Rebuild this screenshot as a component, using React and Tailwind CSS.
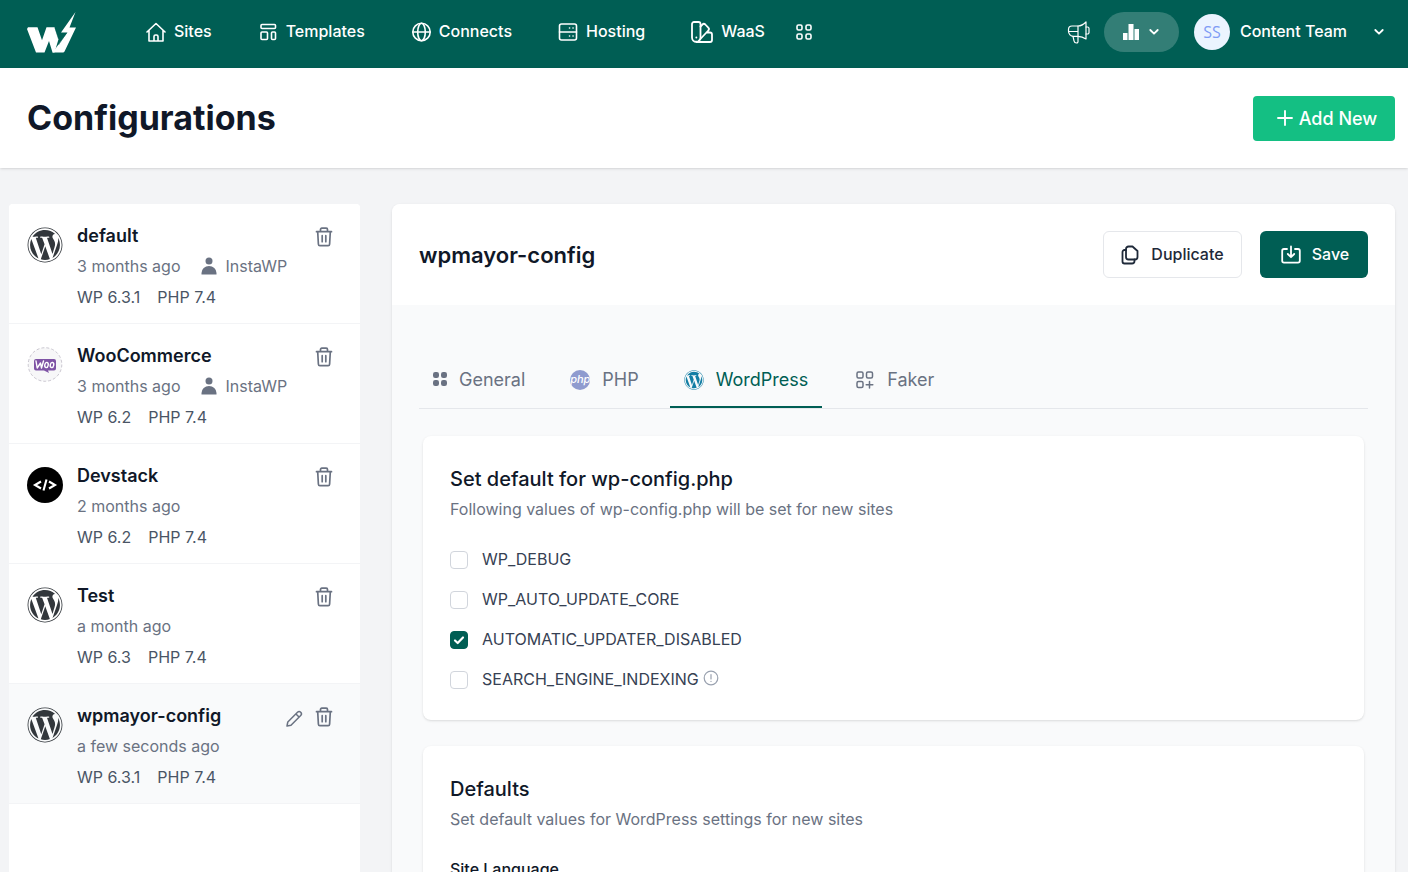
import React, { useState } from 'react';
import { FaWordpress } from 'react-icons/fa';

const stroke = {
    fill: 'none',
    stroke: 'currentColor',
    strokeWidth: 1.6,
    strokeLinecap: 'round',
    strokeLinejoin: 'round',
    'aria-hidden': true,
};

const LogoIcon = () => (
    <svg viewBox="0 0 50 42" className="w-[50px] h-[42px]" fill="currentColor" aria-hidden="true">
        <path d="M1 15.300h9.500l4.500 13 4.500-13h8l4 12L27.500 40.500h-2L22 29l-4.500 11.500H9L0 17z" />
        <path d="M48.500 0L34 20.500h6.500L25.500 40.500H36a2 2 0 0 0 1.500-1L49 15.500h-6.500z" />
        <path d="M28 16l3.500 11M39.500 21L31.500 33" fill="none" stroke="#005e54" strokeWidth="0.500" />
    </svg>
);

const HomeIcon = () => (
    <svg viewBox="0 0 20 20" className="w-5 h-5" {...stroke}>
        <path d="M1 10l9-8.500 9 8.500M3 8.500V19h14V8.500M8 19v-4.500a1.500 1.500 0 0 1 1.500-1.500h1a1.500 1.500 0 0 1 1.500 1.500V19" />
    </svg>
);

const TemplateIcon = () => (
    <svg viewBox="0 0 20 20" className="w-5 h-5" {...stroke}>
        <rect x="3" y="2.500" width="14.500" height="4" rx="1" />
        <rect x="3" y="10" width="6.500" height="7.500" rx="1" />
        <rect x="13.500" y="10" width="4" height="7.500" rx="1" />
    </svg>
);

const GlobeIcon = () => (
    <svg viewBox="0 0 20 20" className="w-5 h-5" {...stroke}>
        <circle cx="10.500" cy="10" r="8.700" />
        <ellipse cx="10.500" cy="10" rx="3.800" ry="8.700" />
        <path d="M2 10h17" />
    </svg>
);

const ServerIcon = () => (
    <svg viewBox="0 0 20 20" className="w-5 h-5" {...stroke}>
        <rect x="1.500" y="2" width="17" height="16" rx="2" />
        <path d="M1.500 10h17M11.500 6h.1M15 6h.1M11.500 14h.1M15 14h.1" />
    </svg>
);

const SwatchIcon = () => (
    <svg viewBox="0 0 22 22" className="w-[22px] h-[22px]" {...stroke} strokeWidth="1.800">
        <path d="M1 3a2 2 0 0 1 2-2h4.500a2 2 0 0 1 2 2v13.500a4.200 4.200 0 0 1-8.500 0z" />
        <path d="M9.500 5.500l2-2a2 2 0 0 1 2.800 0l3 3.200a2 2 0 0 1 0 2.800L8 19.500M15.500 11.500H19a2 2 0 0 1 2 2V19a2 2 0 0 1-2 2H5.500M5.300 16.500h.1" />
    </svg>
);

const GridIcon = () => (
    <svg viewBox="0 0 18 18" className="w-[18px] h-[18px]" {...stroke}>
        <rect x="2" y="2" width="5" height="5" rx="1.500" />
        <rect x="11" y="2" width="5" height="5" rx="1.500" />
        <rect x="2" y="11" width="5" height="5" rx="1.500" />
        <rect x="11" y="11" width="5" height="5" rx="1.500" />
    </svg>
);

const MegaphoneIcon = () => (
    <svg viewBox="0 0 24 24" className="w-6 h-6" {...stroke} strokeWidth="1.200">
        <path d="M19 2v17c-2.500-1.800-5-2.700-8-2.700H6.500a5 5 0 0 1-5-5v-1.800a3.500 3.500 0 0 1 3.500-3.500h6c3 0 6-2 8-4z" />
        <path d="M11 6v10.300M1.500 11.500H11M6 16.300l1 4.500c.3 1.500 1.300 2.200 2.500 2.200s1.700-1 1.500-2.200v-4.500M19 7h1.500A1.500 1.500 0 0 1 22 8.500v4a1.500 1.500 0 0 1-1.500 1.500H19" />
    </svg>
);

const ChartIcon = () => (
    <svg viewBox="0 0 16 16" className="w-4 h-4" fill="currentColor" aria-hidden="true">
        <path d="M0 9h4.500v7H0zM5.500 0h5v16h-5zM11.500 5H16v11h-4.500z" />
    </svg>
);

const ChevronIcon = () => (
    <svg viewBox="0 0 10 10" className="w-[10px] h-[10px]" {...stroke} strokeWidth="1.800">
        <path d="M1.300 3L5 6.700 8.700 3" />
    </svg>
);

const PlusIcon = () => (
    <svg viewBox="0 0 16 16" className="w-4 h-4" {...stroke} strokeWidth="1.900">
        <path d="M8 1v14M1 8h14" />
    </svg>
);

const TrashIcon = () => (
    <svg viewBox="0 0 18 20" className="w-[18px] h-5" {...stroke} strokeWidth="1.700">
        <path d="M1.500 4.700h15M2.700 4.700l.7 12.500a1.500 1.500 0 0 0 1.500 1.400h8.200a1.500 1.500 0 0 0 1.500-1.400l.7-12.500M5.500 4.500V2.500a1.300 1.300 0 0 1 1.300-1.300h4.400a1.300 1.300 0 0 1 1.300 1.300v2M7.200 8.700v6M10.800 8.700v6" />
    </svg>
);

const PencilIcon = () => (
    <svg viewBox="0 0 18 18" className="w-[18px] h-[18px]" {...stroke} strokeWidth="1.500">
        <path d="M2 17l.8-4L12.500 3.300a2.200 2.200 0 0 1 3.200 3.200L6 16.200zM11 5l3 3" />
    </svg>
);

const UserIcon = () => (
    <svg viewBox="0 0 16 18" className="w-4 h-[18px]" fill="currentColor" aria-hidden="true">
        <circle cx="8" cy="4" r="3.500" />
        <path d="M.5 17.500v-1.500a7.500 7 0 0 1 15 0v1.500z" />
    </svg>
);

const DuplicateIcon = () => (
    <svg viewBox="1 0 18 20" className="w-[18px] h-5" {...stroke} strokeWidth="1.800">
        <path d="M8.500 1.500h4l5 4.500v6a2.500 2.500 0 0 1-2.500 2.500H8.500A2.500 2.500 0 0 1 6 12V4a2.500 2.500 0 0 1 2.500-2.500z" />
        <path d="M6 5h-1.500A2 2 0 0 0 2.500 7v9.500a2 2 0 0 0 2 2H12a2.500 2.500 0 0 0 2.500-2.500v-1.500" />
    </svg>
);

const SaveIcon = () => (
    <svg viewBox="0 0 20 20" className="w-5 h-5" {...stroke} strokeWidth="1.800">
        <path d="M6 4H3a1.800 1.800 0 0 0-1.800 1.800v10a1.800 1.800 0 0 0 1.800 1.800h14a1.800 1.800 0 0 0 1.800-1.800v-10A1.800 1.800 0 0 0 17 4h-3M10 1.500V12M6.800 9l3.200 3.200L13.200 9" />
    </svg>
);

const DotsIcon = () => (
    <svg viewBox="0 0 14 20" className="w-[14px] h-5" fill="currentColor" aria-hidden="true">
        <rect x="0" y="2" width="6" height="6" rx="2.200" />
        <rect x="8" y="2" width="6" height="6" rx="2.200" />
        <rect x="0" y="10" width="6" height="6" rx="2.200" />
        <rect x="8" y="10" width="6" height="6" rx="2.200" />
    </svg>
);

const PhpIcon = () => (
    <span className="w-5 h-5 rounded-full bg-[#8f9bcf] text-white text-[11px] leading-[18px] italic font-medium flex justify-center overflow-hidden">
        php
    </span>
);

const FakerIcon = () => (
    <svg viewBox="0 0 22 20" className="w-[22px] h-5" {...stroke} strokeWidth="1.500">
        <rect x="4" y="2" width="6" height="6" rx="1.500" />
        <rect x="13.500" y="2" width="6" height="6" rx="1.500" />
        <rect x="4" y="11.500" width="6" height="6" rx="1.500" />
        <path d="M16.500 11.500v6.500M13.200 14.700h6.600" />
    </svg>
);

const InfoIcon = () => (
    <svg viewBox="0 0 16 16" className="w-4 h-4" {...stroke} strokeWidth="1.200">
        <circle cx="8" cy="8" r="6.800" />
        <path d="M8 4.500V9M8 11.300v.1" />
    </svg>
);

const WooAvatar = () => (
    <svg viewBox="0 0 36 36" className="w-9 h-9" aria-label="WooCommerce logo">
        <circle cx="18" cy="17.500" r="16.800" fill="#f7f7f8" stroke="#b5b0bd" strokeWidth="0.700" strokeDasharray="3 2" />
        <path d="M9 12h18a2 2 0 0 1 2 2v7.500a2 2 0 0 1-2 2h-6l1 2.500-5-2.500H9a2 2 0 0 1-2-2V14a2 2 0 0 1 2-2z" fill="#7f54a5" />
        <g fill="none" stroke="#fff" strokeWidth="1.400" strokeLinecap="round" strokeLinejoin="round">
            <path d="M9 14l1.200 7 3.300-5 1 5L16.500 14" />
            <ellipse cx="19.500" cy="18" rx="1.700" ry="2.600" transform="rotate(12 19.500 18)" />
            <ellipse cx="25" cy="18" rx="1.700" ry="2.600" transform="rotate(12 25 18)" />
        </g>
    </svg>
);

const CodeAvatar = () => (
    <svg viewBox="0 0 36 36" className="w-9 h-9" aria-label="Devstack logo">
        <circle cx="18" cy="18" r="18" fill="#000" />
        <path d="M14 14.500L8 18l6 3.500M22 14.500l6 3.500-6 3.500M19.500 12.500l-3 11" fill="none" stroke="#fff" strokeWidth="2.100" />
    </svg>
);

const avatars = {
    wordpress: <FaWordpress className="w-9 h-9 text-[#32373c]" />,
    woo: <WooAvatar />,
    code: <CodeAvatar />,
};

const navItems = [
    { label: 'Sites', icon: <HomeIcon /> },
    { label: 'Templates', icon: <TemplateIcon /> },
    { label: 'Connects', icon: <GlobeIcon /> },
    { label: 'Hosting', icon: <ServerIcon /> },
    { label: 'WaaS', icon: <SwatchIcon /> },
];

const configs = [
    { name: 'default', time: '3 months ago', owner: 'InstaWP', wp: '6.3.1', php: '7.4', avatar: 'wordpress' },
    { name: 'WooCommerce', time: '3 months ago', owner: 'InstaWP', wp: '6.2', php: '7.4', avatar: 'woo' },
    { name: 'Devstack', time: '2 months ago', wp: '6.2', php: '7.4', avatar: 'code' },
    { name: 'Test', time: 'a month ago', wp: '6.3', php: '7.4', avatar: 'wordpress' },
    { name: 'wpmayor-config', time: 'a few seconds ago', wp: '6.3.1', php: '7.4', avatar: 'wordpress', active: true },
];

const tabs = [
    { label: 'General', icon: <DotsIcon /> },
    { label: 'PHP', icon: <PhpIcon /> },
    { label: 'WordPress', icon: <FaWordpress className="w-5 h-5 text-[#137ea4]" /> },
    { label: 'Faker', icon: <FakerIcon /> },
];

const Header = () => (
    <header className="h-[68px] shrink-0 bg-[#005e54] text-white flex items-center justify-between pl-[27px] pr-6">
        <div className="flex items-center">
            <a href="#home" aria-label="InstaWP" className="pb-0.5">
                <LogoIcon />
            </a>
            <nav className="flex items-center gap-[46px] ml-[69px] pb-1">
                {navItems.map((item) => (
                    <a key={item.label} href={`#${item.label}`} className="flex items-center gap-2 font-medium leading-6">
                        {item.icon}
                        <span className="pb-0.5">{item.label}</span>
                    </a>
                ))}
                <button type="button" aria-label="More" className="-ml-4">
                    <GridIcon />
                </button>
            </nav>
        </div>
        <div className="flex items-center pb-1">
            <button type="button" aria-label="Announcements">
                <MegaphoneIcon />
            </button>
            <button type="button" aria-label="Usage" className="ml-[13px] w-[75px] h-10 rounded-full bg-white/20 flex items-center justify-center gap-[10px]">
                <ChartIcon />
                <ChevronIcon />
            </button>
            <button type="button" className="ml-[15px] flex items-center font-medium leading-6">
                <span className="w-9 h-9 rounded-full bg-[#ebf4ff] text-[#7f9cf5] font-normal flex items-center justify-center font-['Open_Sans',sans-serif]">
                    SS
                </span>
                <span className="ml-[10px] mr-[27px] pb-0.5">Content Team</span>
                <ChevronIcon />
            </button>
        </div>
    </header>
);

const ConfigItem = ({ config }) => (
    <li className={`h-[120px] pt-5 pl-[18px] pr-[27px] flex items-start border-b border-gray-100 ${config.active ? 'bg-gray-50' : 'bg-white'}`}>
        <div className="shrink-0 pt-[3px]">{avatars[config.avatar]}</div>
        <div className="ml-[14px] flex-1">
            <h3 className="text-lg leading-6 font-semibold text-gray-900">{config.name}</h3>
            <div className="mt-[6px] flex items-center leading-6 text-gray-500">
                <span>{config.time}</span>
                {config.owner && (
                    <span className="ml-[21px] flex items-center gap-2">
                        <UserIcon />
                        {config.owner}
                    </span>
                )}
            </div>
            <div className="mt-[7px] flex gap-[17px] leading-6 text-gray-600">
                <span>WP {config.wp}</span>
                <span>PHP {config.php}</span>
            </div>
        </div>
        <div className="flex items-end gap-3 pt-[3px] text-gray-500">
            {config.active && (
                <button type="button" aria-label={`Edit ${config.name}`}>
                    <PencilIcon />
                </button>
            )}
            <button type="button" aria-label={`Delete ${config.name}`}>
                <TrashIcon />
            </button>
        </div>
    </li>
);

const CheckOption = ({ name, checked, onChange, info }) => (
    <div className="flex items-center">
        <span className="relative flex">
            <input
                id={name}
                type="checkbox"
                checked={checked}
                onChange={onChange}
                className="peer appearance-none w-[18px] h-[18px] rounded border border-gray-300 bg-white checked:bg-[#005e54] checked:border-[#005e54]"
            />
            <svg viewBox="0 0 18 18" className="absolute inset-0 w-[18px] h-[18px] text-white pointer-events-none hidden peer-checked:block" {...stroke} strokeWidth="2.200">
                <path d="M5 9.500l2.700 2.500L13 6.500" />
            </svg>
        </span>
        <label htmlFor={name} className="ml-[14px] pb-0.5 leading-6 text-gray-700">
            {name}
        </label>
        {info && (
            <span className="ml-1 pb-1 text-gray-400">
                <InfoIcon />
            </span>
        )}
    </div>
);

const Card = ({ title, description, children }) => (
    <section className="bg-white rounded-lg shadow px-[27px] pt-[29px] pb-[27px]">
        <h3 className="text-xl leading-7 font-medium text-gray-900">{title}</h3>
        <p className="mt-1 leading-6 text-gray-500">{description}</p>
        {children}
    </section>
);

const App = () => {
    const [activeTab, setActiveTab] = useState('WordPress');
    const [options, setOptions] = useState({
        WP_DEBUG: false,
        WP_AUTO_UPDATE_CORE: false,
        AUTOMATIC_UPDATER_DISABLED: true,
        SEARCH_ENGINE_INDEXING: false,
    });

    const toggle = (name) => setOptions({ ...options, [name]: !options[name] });

    return (
        <div className="h-screen flex flex-col overflow-hidden bg-gray-100 font-['Inter',sans-serif] text-base">
            <Header />
            <div className="h-[100px] shrink-0 bg-white shadow flex items-center justify-between pl-[27px] pr-[13px]">
                <h1 className="text-[34px] leading-10 font-bold text-gray-900">Configurations</h1>
                <button type="button" className="h-[45px] w-[142px] rounded bg-[#14bf83] text-white text-lg font-medium flex items-center justify-center gap-[6px] pl-1.5">
                    <PlusIcon />
                    <span className="pt-0.5">Add New</span>
                </button>
            </div>

            <main className="flex-1 min-h-0 flex gap-8 pt-9 pl-[9px] pr-[13px]">
                <aside className="w-[351px] shrink-0 bg-white rounded-t overflow-hidden">
                    <ul>
                        {configs.map((config) => (
                            <ConfigItem key={config.name} config={config} />
                        ))}
                    </ul>
                </aside>

                <div className="flex-1 min-w-0 flex flex-col rounded-t-lg shadow bg-gray-50">
                    <div className="h-[101px] shrink-0 bg-white rounded-t-lg flex items-center justify-between px-[27px]">
                        <h2 className="text-[22px] leading-8 font-semibold text-gray-900">wpmayor-config</h2>
                        <div className="flex gap-[18px]">
                            <button type="button" className="h-[47px] w-[139px] rounded-md border border-gray-200 text-gray-800 font-medium flex items-center justify-center gap-3">
                                <DuplicateIcon />
                                <span className="pb-0.5">Duplicate</span>
                            </button>
                            <button type="button" className="h-[47px] w-[108px] rounded-md bg-[#005e54] text-white font-medium flex items-center justify-center gap-[11px] pl-0.5">
                                <SaveIcon />
                                <span className="pb-0.5">Save</span>
                            </button>
                        </div>
                    </div>

                    <div className="flex-1 min-h-0 overflow-hidden px-[27px] pt-[45px]">
                        <div role="tablist" className="flex gap-[17px] border-b border-gray-200">
                            {tabs.map((tab) => (
                                <button
                                    key={tab.label}
                                    type="button"
                                    role="tab"
                                    aria-selected={activeTab === tab.label}
                                    onClick={() => setActiveTab(tab.label)}
                                    className={`h-[58px] px-[14px] pt-[3px] border-b-2 flex items-center gap-3 text-lg ${activeTab === tab.label ? 'border-[#005e54] text-[#005e54]' : 'border-transparent text-gray-500'}`}
                                >
                                    {tab.icon}
                                    {tab.label}
                                </button>
                            ))}
                        </div>

                        <div className="px-1 pt-[27px] flex flex-col gap-[26px]">
                            <Card title="Set default for wp-config.php" description="Following values of wp-config.php will be set for new sites">
                                <div className="mt-[26px] flex flex-col gap-[14px]">
                                    {Object.keys(options).map((name) => (
                                        <CheckOption
                                            key={name}
                                            name={name}
                                            checked={options[name]}
                                            onChange={() => toggle(name)}
                                            info={name === 'SEARCH_ENGINE_INDEXING'}
                                        />
                                    ))}
                                </div>
                            </Card>
                            <Card title="Defaults" description="Set default values for WordPress settings for new sites">
                                <label htmlFor="site-language" className="mt-[26px] block leading-6 font-medium text-gray-900">
                                    Site Language
                                </label>
                                <select id="site-language" className="mt-2 h-11 w-full rounded border border-gray-300 px-3 text-gray-700">
                                    <option>English (United States)</option>
                                </select>
                            </Card>
                        </div>
                    </div>
                </div>
            </main>
        </div>
    );
};

export default App;
